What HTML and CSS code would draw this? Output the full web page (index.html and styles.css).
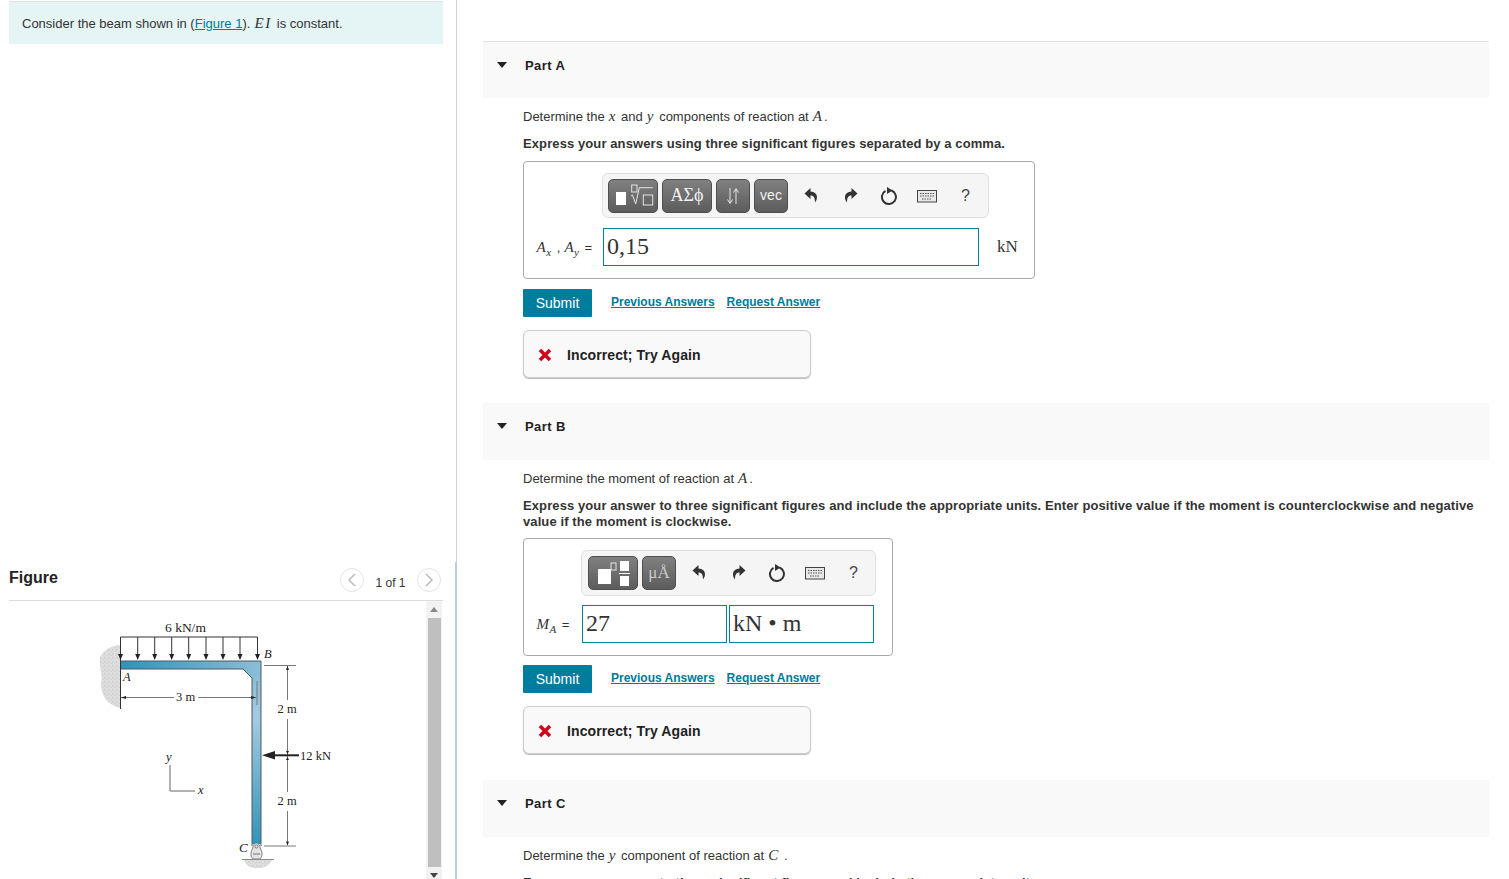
FILE: index.html
```html
<!DOCTYPE html>
<html lang="en">
<head>
  <meta charset="UTF-8" />
  <title>Beam reactions</title>
  <link rel="stylesheet" href="styles.css">
</head>
<body>

<div class="left-col">
  <div class="prompt-wrap">
    <div class="prompt">Consider the beam shown in (<a href="#">Figure 1</a>). <i class="math math-wide">EI</i> is constant.</div>
  </div>

  <div class="figure-wrap">
    <div class="figure-head">
      <h2>Figure</h2>
      <div class="pager">
        <span class="pager-btn"><svg width="10" height="14" viewBox="0 0 10 14"><path d="M8 1 L2 7 L8 13" /></svg></span>
        <span class="pager-text">1 of 1</span>
        <span class="pager-btn"><svg width="10" height="14" viewBox="0 0 10 14"><path d="M2 1 L8 7 L2 13" /></svg></span>
      </div>
    </div>
    <div class="figure-body">
      <svg class="beam" width="260" height="269" viewBox="90 610 260 269">
        <defs>
          <linearGradient id="gradTop" x1="0" y1="0" x2="1" y2="0">
            <stop offset="0" stop-color="#2f93bb" />
            <stop offset="1" stop-color="#8bbdd7" />
          </linearGradient>
          <linearGradient id="gradCol" x1="0" y1="0" x2="0" y2="1">
            <stop offset="0" stop-color="#8bbdd7" />
            <stop offset="0.25" stop-color="#a3cbe0" />
            <stop offset="1" stop-color="#3393b8" />
          </linearGradient>
          <pattern id="speckle" width="4" height="4" patternUnits="userSpaceOnUse">
            <rect width="4" height="4" fill="#dedede" />
            <rect x="0" y="1" width="1.500" height="1.500" fill="#cccccc" />
            <rect x="2.500" y="3" width="1.500" height="1" fill="#d2d2d2" />
          </pattern>
        </defs>
        <!-- wall and ground -->
        <path fill="url(#speckle)" d="M120 645 C110 646 104 650 100 657 C99 668 103 675 101 684 C101 696 108 705 120 708 Z" />
        <path fill="url(#speckle)" d="M244 860 H272 C270 866 262 869 255 868 C250 868 246 865 244 860 Z" />
        <!-- beam -->
        <polygon fill="url(#gradTop)" points="120.5,661 261,661 261,678 252,678 243,669 120.5,669" />
        <rect x="252" y="676" width="9" height="168" fill="url(#gradCol)" />
        <path class="edge" d="M120.5 661 H261 V846 M120.5 669 H243 L252 678 V846" />
        <!-- distributed load -->
        <path class="thin" d="M120.5 709 V637 H257.5 V655 M137.7 637 V655 M154.7 637 V655 M171.7 637 V655 M188.7 637 V655 M206 637 V655 M223 637 V655 M240 637 V655" />
        <path class="head" d="M118 654 h5 l-2.500 6 Z M135.200 654 h5 l-2.500 6 Z M152.200 654 h5 l-2.500 6 Z M169.200 654 h5 l-2.500 6 Z M186.200 654 h5 l-2.500 6 Z M203.500 654 h5 l-2.500 6 Z M220.500 654 h5 l-2.500 6 Z M237.500 654 h5 l-2.500 6 Z M255 654 h5 l-2.500 6 Z" />
        <!-- dimensions -->
        <path class="dim" d="M121 697.500 H174 M198 697.500 H256 M257 681 V705 M264 665.500 H296 M264 846 H296 M287.500 666 V700 M287.500 719 V792 M287.500 811 V845" />
        <path class="head" d="M121 697.500 l5 -1.500 v3 Z M256 697.500 l-5 -1.500 v3 Z M287.500 666 l-1.500 4 h3 Z M287.500 845.500 l-1.500 -4 h3 Z M287.500 754 l-1.500 -3 h3 Z M287.500 757 l-1.500 3 h3 Z" />
        <!-- point load -->
        <path class="load" d="M272 755.300 H299" />
        <path class="head" d="M262 755.300 L275 751 V759.500 Z" />
        <!-- axes -->
        <path class="axis" d="M170 765 V791 H195" />
        <!-- pin support -->
        <path class="pin" d="M256.500 843 C259 843 260 846 260.500 849 C263 852 262.500 859 259 859 H254 C250.500 859 250 852 252.500 849 C253 846 254 843 256.500 843 Z" />
        <circle class="pin" cx="256.500" cy="846.500" r="1.600" />
        <path class="dim" d="M253 854 H260" />
        <path class="ground" d="M242 859.500 H274" />
        <text class="lbl wide" x="165" y="632">6 kN/m</text>
        <text class="lbl" x="176" y="701">3 m</text>
        <text class="lbl" x="277.500" y="713">2 m</text>
        <text class="lbl" x="277.500" y="805">2 m</text>
        <text class="lbl" x="300" y="760">12 kN</text>
        <text class="lbl it" x="264" y="658">B</text>
        <text class="lbl it" x="123" y="681">A</text>
        <text class="lbl it big" x="239" y="852">C</text>
        <text class="lbl it" x="166" y="761">y</text>
        <text class="lbl it" x="198" y="794">x</text>
      </svg>
      <div class="scrollbar">
        <span class="arrow-up"></span>
        <span class="thumb"></span>
        <span class="arrow-down"></span>
      </div>
    </div>
  </div>
</div>

<div class="right-col">

  <div class="part-head first"><span class="caret"></span><span class="part-name">Part A</span></div>
  <div class="part-body">
    <p>Determine the <i class="math">x</i> and <i class="math">y</i> components of reaction at <i class="math">A</i>.</p>
    <p class="strong">Express your answers using three significant figures separated by a comma.</p>

    <div class="answer answer-a">
      <div class="toolbar toolbar-a">
        <span class="tbtn w50">
          <svg width="44" height="26" viewBox="0 0 44 26"><rect class="fill" x="5" y="9" width="10" height="13" /><rect class="hollow" x="20.700" y="2" width="5.300" height="7" /><path class="hollow" d="M20 13 l1.500 -1 L24.700 21 L28.300 4.700 H41.700" /><rect class="hollow" x="32.300" y="12" width="9.400" height="10" /></svg>
        </span>
        <span class="tbtn w50 greek">ΑΣϕ</span>
        <span class="tbtn w34">
          <svg width="14" height="18" viewBox="0 0 14 18"><path class="hollow" d="M4 1 V16 M1.500 12.500 L4 16.500 L6.500 12.500 M10 17 V2 M7.500 5.500 L10 1.500 L12.500 5.500" /></svg>
        </span>
        <span class="tbtn w34 vec">vec</span>
        <span class="tools">
          <span class="tool"><svg width="16" height="18" viewBox="0 0 16 18"><path class="solid" d="M6.500 1 L0.500 6.500 L6.500 12 V8.500 C10 8.500 11 11 11 15.500 C14 12 14.500 5 6.500 4.500 Z" /></svg></span>
          <span class="tool"><svg width="16" height="18" viewBox="0 0 16 18"><path class="solid" d="M9.500 1 L15.500 6.500 L9.500 12 V8.500 C6 8.500 5 11 5 15.500 C2 12 1.500 5 9.500 4.500 Z" /></svg></span>
          <span class="tool"><svg width="18" height="18" viewBox="0 0 18 18"><path class="ring" d="M11.500 3.500 A7 7 0 1 1 5.500 3.900" /><path class="solid" d="M7 0 L12.500 3.500 L7 7 Z" /></svg></span>
          <span class="tool"><svg width="20" height="14" viewBox="0 0 20 14"><rect class="kb" x="0.500" y="1.500" width="19" height="11.500" /><path class="keys" d="M3 4.500 H17 M3 7 H17 M5 10 H15" /></svg></span>
          <span class="tool help">?</span>
        </span>
      </div>
      <div class="answer-row">
        <span class="var var-a"><i class="math">A<sub>x</sub></i> , <i class="math">A<sub>y</sub></i> =</span>
        <span class="field field-a">0,15</span>
        <span class="unit">kN</span>
      </div>
    </div>

    <div class="actions actions-a">
      <button class="submit">Submit</button>
      <a href="#">Previous Answers</a>
      <a href="#">Request Answer</a>
    </div>

    <div class="feedback">
      <svg width="14" height="14" viewBox="0 0 14 14"><path class="cross" d="M2 2 L12 12 M12 2 L2 12" /></svg>
      <span>Incorrect; Try Again</span>
    </div>
  </div>

  <div class="part-head"><span class="caret"></span><span class="part-name">Part B</span></div>
  <div class="part-body">
    <p>Determine the moment of reaction at <i class="math">A</i>.</p>
    <p class="strong tight">Express your answer to three significant figures and include the appropriate units. Enter positive value if the moment is counterclockwise and negative value if the moment is clockwise.</p>

    <div class="answer answer-b">
      <div class="toolbar toolbar-b">
        <span class="tbtn w50">
          <svg width="44" height="30" viewBox="0 0 44 30"><rect class="fill" x="7" y="11" width="13" height="15" /><rect class="hollow" x="20" y="5" width="5" height="7" /><rect class="fill" x="29" y="3" width="9" height="10" /><rect class="fill" x="28" y="15" width="11" height="1" /><rect class="fill" x="29" y="18" width="9" height="10" /></svg>
        </span>
        <span class="tbtn w34 units">μÅ</span>
        <span class="tools">
          <span class="tool"><svg width="16" height="18" viewBox="0 0 16 18"><path class="solid" d="M6.500 1 L0.500 6.500 L6.500 12 V8.500 C10 8.500 11 11 11 15.500 C14 12 14.500 5 6.500 4.500 Z" /></svg></span>
          <span class="tool"><svg width="16" height="18" viewBox="0 0 16 18"><path class="solid" d="M9.500 1 L15.500 6.500 L9.500 12 V8.500 C6 8.500 5 11 5 15.500 C2 12 1.500 5 9.500 4.500 Z" /></svg></span>
          <span class="tool"><svg width="18" height="18" viewBox="0 0 18 18"><path class="ring" d="M11.500 3.500 A7 7 0 1 1 5.500 3.900" /><path class="solid" d="M7 0 L12.500 3.500 L7 7 Z" /></svg></span>
          <span class="tool"><svg width="20" height="14" viewBox="0 0 20 14"><rect class="kb" x="0.500" y="1.500" width="19" height="11.500" /><path class="keys" d="M3 4.500 H17 M3 7 H17 M5 10 H15" /></svg></span>
          <span class="tool help">?</span>
        </span>
      </div>
      <div class="answer-row answer-row-b">
        <span class="var var-b"><i class="math">M<sub>A</sub></i> =</span>
        <span class="field field-b">27</span>
        <span class="field field-b field-units">kN <b class="dot">•</b> m</span>
      </div>
    </div>

    <div class="actions actions-b">
      <button class="submit">Submit</button>
      <a href="#">Previous Answers</a>
      <a href="#">Request Answer</a>
    </div>

    <div class="feedback">
      <svg width="14" height="14" viewBox="0 0 14 14"><path class="cross" d="M2 2 L12 12 M12 2 L2 12" /></svg>
      <span>Incorrect; Try Again</span>
    </div>
  </div>

  <div class="part-head part-c"><span class="caret"></span><span class="part-name">Part C</span></div>
  <div class="part-body">
    <p>Determine the <i class="math">y</i> component of reaction at <i class="math">C</i> .</p>
    <p class="strong">Express your answer to three significant figures and include the appropriate units.</p>
  </div>
</div>

</body>
</html>
```

FILE: styles.css
```css
html, body {
  height: 879px;
  overflow: hidden;
}

body {
  margin: 0;
  display: flex;
  font-family: "Liberation Sans", Arial, sans-serif;
  font-size: 13px;
  color: #333;
  background-color: white;
}

a {
  color: #007a9c;
}

.math {
  margin: 0 1.500px 0 0.5px;
  font-family: "Liberation Serif", serif;
  font-style: italic;
  font-size: 15px;
  line-height: 0;
  letter-spacing: 0.5px;
}

.math-wide {
  letter-spacing: 1.5px;
}

.math sub {
  font-size: 11px;
  line-height: 0;
}

/* left column */
.left-col {
  width: 457px;
  height: 879px;
  flex-shrink: 0;
  display: flex;
  flex-direction: column;
}

.prompt-wrap {
  flex: 1;
  padding: 1px 13px 0 9px;
  border-right: 1px solid #c6d4e4;
}

.prompt {
  height: 42px;
  line-height: 43px;
  padding-left: 13px;
  background-color: #e5f5f6;
  border-top: 1px solid #dfe3e6;
}

.figure-wrap {
  padding: 0 12px 0 9px;
  border-right: 2px solid #b8cce0;
}

.figure-head {
  height: 38px;
  display: flex;
  justify-content: space-between;
  align-items: center;
  border-bottom: 1px solid #ddd;
}

.figure-head h2 {
  margin: 0 0 6px;
  font-size: 16px;
  font-weight: bold;
  color: #222;
}

.pager {
  display: flex;
  align-items: center;
  margin-right: 2px;
  margin-top: -3px;
}

.pager-text {
  width: 53px;
  text-align: center;
  margin-top: 6px;
  font-size: 12px;
}

.pager-btn {
  width: 24px;
  height: 24px;
  border: 1px solid #e4e4e4;
  border-radius: 50%;
  display: flex;
  align-items: center;
  justify-content: center;
  box-sizing: border-box;
}

.pager-btn path {
  fill: none;
  stroke: #bbb;
  stroke-width: 1.5;
}

.figure-body {
  height: 278px;
  display: flex;
  justify-content: space-between;
  overflow: hidden;
}

.beam {
  margin: 9px 0 0 81px;
}

.edge { fill: none; stroke: #4a5a60; stroke-width: 1; }
.thin { fill: none; stroke: #333; stroke-width: 1; }
.dim { fill: none; stroke: #777; stroke-width: 1; }
.head { fill: #222; }
.load { fill: none; stroke: #222; stroke-width: 2; }
.axis { fill: none; stroke: #666; stroke-width: 1; }
.pin { fill: #e4e4e4; stroke: #666; stroke-width: 0.8; }
.ground { fill: none; stroke: #888; stroke-width: 1; }

.lbl {
  font-family: "Liberation Serif", serif;
  font-size: 12.500px;
  fill: #222;
}

.lbl.wide { font-size: 13.500px; }
.lbl.it { font-style: italic; }
.lbl.big { font-size: 13px; }

.scrollbar {
  width: 16px;
  margin-right: 1px;
  background-color: #f2f2f2;
  display: flex;
  flex-direction: column;
  align-items: center;
}

.arrow-up {
  margin: 6px 0 6px;
  border-left: 4px solid transparent;
  border-right: 4px solid transparent;
  border-bottom: 5px solid #888;
}

.thumb {
  width: 13px;
  height: 249px;
  background-color: #bfbfbf;
}

.arrow-down {
  margin-top: 6px;
  border-left: 4px solid transparent;
  border-right: 4px solid transparent;
  border-top: 5px solid #444;
}

/* right column */
.right-col {
  width: 1006px;
  margin-left: 26px;
  padding-top: 41px;
}

.part-head {
  height: 57px;
  box-sizing: border-box;
  margin-top: 25px;
  background-color: #f9f9f9;
  display: flex;
  align-items: flex-start;
  padding-top: 15px;
}

.part-head.first {
  margin-top: 0;
  border-top: 1px solid #e3e3e3;
}

.part-head.part-c {
  margin-top: 26px;
}

.caret {
  margin: 5px 18px 0 14px;
  border-left: 5.5px solid transparent;
  border-right: 5.5px solid transparent;
  border-top: 6px solid #222;
}

.part-name {
  margin-top: 1px;
  font-size: 13px;
  line-height: 16px;
  font-weight: bold;
  color: #222;
  letter-spacing: 0.4px;
}

.part-body {
  padding: 11px 0 0 40px;
}

.part-body p {
  margin: 0 0 11px;
  font-size: 13px;
  line-height: 16px;
}

.part-body p.strong {
  margin: 0 10px 9px 0;
  font-weight: bold;
  letter-spacing: 0.1px;
}

.part-body p.tight {
  margin-bottom: 8px;
}

.answer {
  box-sizing: border-box;
  border: 1px solid #aaa;
  border-radius: 4px;
  padding: 11px 12px 12px;
}

.answer-a { width: 512px; height: 118px; }
.answer-b { width: 370px; height: 118px; }

.toolbar {
  box-sizing: border-box;
  display: flex;
  align-items: center;
  padding-left: 5px;
  background-color: #f5f5f5;
  border: 1px solid #e0e0e0;
  border-radius: 6px;
}

.toolbar-a { width: 387px; height: 45px; margin-left: 66px; }
.toolbar-b { width: 295px; height: 46px; margin-left: 45px; padding-left: 6px; }

.tbtn {
  box-sizing: border-box;
  height: 34px;
  margin-right: 4px;
  display: flex;
  align-items: center;
  justify-content: center;
  color: #f2f2f2;
  background: linear-gradient(#808080, #5c5c5c);
  border: 1px solid #4f4f4f;
  border-radius: 5px;
}

.w50 { width: 50px; }
.w34 { width: 34px; }

.fill { fill: #fff; }
.hollow { fill: none; stroke: #e4e4e4; stroke-width: 1; }

.greek {
  font-family: "Liberation Serif", serif;
  font-size: 18px;
}

.vec { font-size: 14px; padding-bottom: 1px; }

.units {
  font-family: "Liberation Serif", serif;
  font-size: 17px;
  color: #ccc;
}

.tools {
  display: flex;
  margin-left: 1px;
}

.tool {
  width: 38.300px;
  height: 34px;
  display: flex;
  align-items: center;
  justify-content: center;
}

.solid { fill: #333; }
.ring { fill: none; stroke: #333; stroke-width: 2; }
.kb { fill: #e8e8e8; stroke: #444; }
.keys { fill: none; stroke: #555; stroke-width: 1.200; stroke-dasharray: 1.500 1; }

.help {
  font-size: 16px;
  color: #444;
}

.answer-row {
  display: flex;
  align-items: center;
  margin-top: 10px;
  height: 38px;
}

.answer-row-b {
  margin-top: 9px;
}

.var {
  flex-shrink: 0;
  white-space: nowrap;
  font-size: 13px;
}

.var-a { width: 67px; }
.var-b { width: 46px; }

.field {
  box-sizing: border-box;
  height: 38px;
  line-height: 35px;
  padding-left: 3px;
  border: 1px solid #007c9c;
  font-family: "Liberation Serif", serif;
  font-size: 24px;
  color: #333;
}

.field-a { width: 376px; }
.field-b { width: 145px; }
.field-units { margin-left: 2px; }

.dot {
  font-weight: normal;
  font-size: 24px;
}

.unit {
  margin-left: 18px;
  font-family: "Liberation Serif", serif;
  font-size: 17px;
}

.actions {
  display: flex;
  align-items: flex-start;
}

.actions-a { margin-top: 10px; }
.actions-b { margin-top: 9px; }

.actions a {
  margin: 6px 12px 0 0;
  font-weight: bold;
  font-size: 12px;
}

.submit {
  width: 69px;
  height: 28px;
  margin-right: 19px;
  padding: 0;
  font-family: "Liberation Sans", Arial, sans-serif;
  font-size: 14px;
  color: white;
  background-color: #007c9c;
  border: none;
  border-radius: 1px;
}

.feedback {
  box-sizing: border-box;
  width: 288px;
  height: 48px;
  margin-top: 13px;
  padding: 1px 0 0 14px;
  display: flex;
  align-items: center;
  gap: 15px;
  font-size: 14px;
  font-weight: bold;
  letter-spacing: 0.1px;
  color: #222;
  background-color: #f9f9f9;
  border: 1px solid #ccc;
  border-radius: 6px;
  box-shadow: 0 1px 1px #bbb;
}

.cross {
  fill: none;
  stroke: #d0021b;
  stroke-width: 3.500;
}
```
